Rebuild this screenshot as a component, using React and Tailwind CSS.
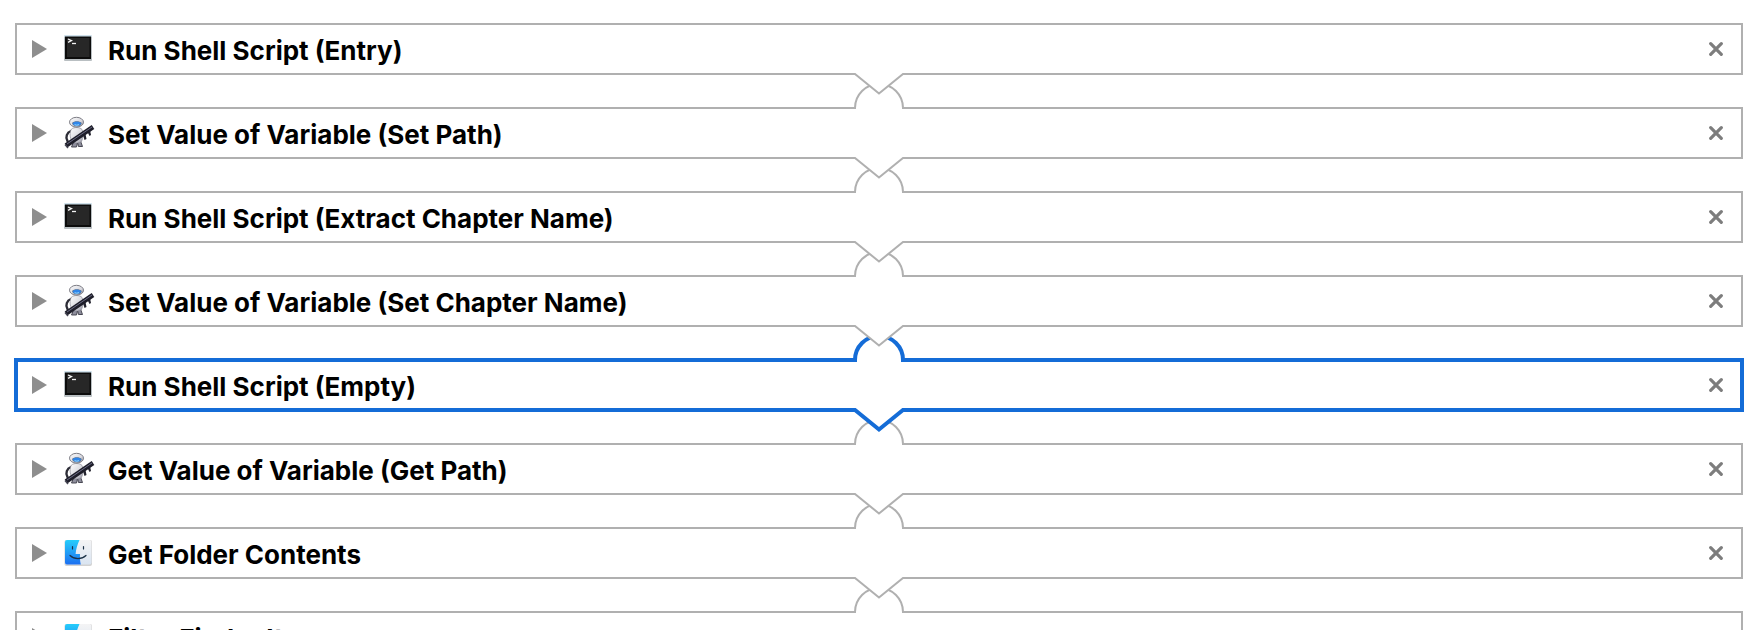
import React from "react";

const actions = [
  { name: "Run Shell Script (Entry)", icon: "terminal" },
  { name: "Set Value of Variable (Set Path)", icon: "robot" },
  { name: "Run Shell Script (Extract Chapter Name)", icon: "terminal" },
  { name: "Set Value of Variable (Set Chapter Name)", icon: "robot" },
  { name: "Run Shell Script (Empty)", icon: "terminal", selected: true },
  { name: "Get Value of Variable (Get Path)", icon: "robot" },
  { name: "Get Folder Contents", icon: "finder" },
  { name: "Filter Finder Items", icon: "finder" },
];

function TerminalIcon() {
  return (
    <svg viewBox="0 0 32 32" className="size-8" aria-hidden="true">
      <rect x="2" y="3" width="28" height="25" rx="1" fill="#b9bfc2" />
      <rect x="2" y="2" width="28" height="2" rx="1" fill="#cfe0ea" />
      <rect x="3" y="3.5" width="26" height="22.5" fill="#0c0c0c" />
      <rect x="5" y="5" width="22.5" height="19" fill="#272727" />
      <path d="M6 6 9.500 7.600 6 9.400" fill="none" stroke="#f2f2f2" strokeWidth="1.3" />
      <path d="M10 10.500h4" stroke="#f2f2f2" strokeWidth="1.3" />
    </svg>
  );
}

function RobotIcon() {
  return (
    <svg viewBox="0 0 32 32" className="size-8 overflow-visible" aria-hidden="true">
      <defs>
        <linearGradient id="shell" x1="0" y1="0" x2="1" y2="1">
          <stop offset="0" stopColor="#ffffff" />
          <stop offset="0.6" stopColor="#d8d8de" />
          <stop offset="1" stopColor="#9292a0" />
        </linearGradient>
      </defs>
      <path d="M9 14C5 15.500 3 20 5.500 24" fill="none" stroke="#2c2c36" strokeWidth="2.400" strokeLinecap="round" />
      <path d="M11.500 25 9.500 30h5l1-4zM15.500 25l1 4.500h4L18.500 24z" fill="#8e8e9c" stroke="#3b3b46" strokeWidth=".9" />
      <path d="M9.500 12C12 10 18 10 20 12.500c1.500 3 1.500 8-.5 12-2 1.800-6.500 2-9 .5C7.500 21 7.500 15 9.500 12z" fill="url(#shell)" stroke="#8c8c98" strokeWidth=".7" />
      <ellipse cx="14.500" cy="5.200" rx="7" ry="4.900" fill="url(#shell)" stroke="#6f6f78" strokeWidth=".9" />
      <path d="M10 6C12 3.500 17.500 3.500 19.800 6c-.5 2.400-2.300 3.300-4.800 3.300S10.500 8.400 10 6z" fill="#5c7392" />
      <path d="M10.800 6.200c2-1.900 6-1.900 8.200 0-.5 2-2.200 2.600-4.100 2.600s-3.700-.7-4.100-2.600z" fill="#2f86ea" />
      <path d="M12.600 7.700q2.200 1 4.400 0" fill="none" stroke="#9addff" strokeWidth="1" />
      <path d="m21 18 1.500 5 2-1-1-5zM25.500 15l2 4 1.500-1-1-5z" fill="#24242f" />
      <path d="M4 28.500 31 10" stroke="#1e1e2a" strokeWidth="4.600" />
      <path d="M5 27 30 10" stroke="#6c6c84" strokeWidth="1" />
      <path d="m3 27.500 3 3.500" stroke="#454552" strokeWidth="1.500" />
    </svg>
  );
}

function FinderIcon() {
  return (
    <svg viewBox="0 0 32 32" className="size-8" aria-hidden="true">
      <defs>
        <linearGradient id="face" x1="0" y1="0" x2="0" y2="1">
          <stop offset="0" stopColor="#26cdfb" />
          <stop offset="1" stopColor="#1c6ff0" />
        </linearGradient>
        <linearGradient id="side" x1="0" y1="0" x2="0" y2="1">
          <stop offset="0" stopColor="#f4f4f5" />
          <stop offset="1" stopColor="#d9e4f1" />
        </linearGradient>
      </defs>
      <rect x="2.500" y="3" width="27.500" height="26" rx="2" fill="#d2d2d2" />
      <rect x="3" y="3" width="26.500" height="24.500" rx="2" fill="url(#side)" />
      <path d="M5 3h12.500C15.500 7 14 12 13.600 17H18c-.2 3.500 0 7 .8 10.500H5a2 2 0 0 1-2-2V5a2 2 0 0 1 2-2z" fill="url(#face)" />
      <path d="M10.500 9.500v2.500M21.500 9.500v2.500M8 18.500c4.500 4.200 11.500 4.200 16 0" fill="none" stroke="#1b3146" strokeWidth="1.200" strokeLinecap="round" />
    </svg>
  );
}

const icons = { terminal: TerminalIcon, robot: RobotIcon, finder: FinderIcon };

function Socket({ selected }) {
  return (
    <svg
      viewBox="0 0 56 32"
      className="pointer-events-none absolute bottom-full left-1/2 h-8 w-14 -translate-x-1/2 translate-y-1.5"
      aria-hidden="true"
    >
      <path d="M4 30v-3a24 24 0 0 1 48 0v3z" fill="#fff" />
      <path
        d="M1 27h3a24 24 0 0 1 48 0h3"
        fill="none"
        stroke={selected ? "#146cd7" : "#b0b0b0"}
        strokeWidth={selected ? 4 : 2}
      />
    </svg>
  );
}

function Arrow({ selected }) {
  return (
    <svg
      viewBox="0 0 56 28"
      className="pointer-events-none absolute top-full left-1/2 h-7 w-14 -translate-x-1/2 -translate-y-1"
      aria-hidden="true"
    >
      <path d="M4 0v3l24 19.500L52 3V0z" fill="#fff" />
      <path
        d="M1 3h3l24 19.500L52 3h3"
        fill="none"
        stroke={selected ? "#146cd7" : "#b0b0b0"}
        strokeWidth={selected ? 4 : 2}
      />
    </svg>
  );
}

function ActionRow({ action, first, depth }) {
  const Icon = icons[action.icon];
  const { selected } = action;
  return (
    <li className="relative" style={{ zIndex: depth }}>
      <div
        className={
          selected
            ? "-m-px flex h-[54px] items-center border-4 border-[#146cd7] bg-white px-3"
            : "flex h-[52px] items-center border-2 border-[#b0b0b0] bg-white px-[13px]"
        }
      >
        <button type="button" aria-label={`Expand ${action.name}`} className="flex h-8 w-6 items-center pl-0.5">
          <svg viewBox="0 0 15 18" className="h-[18px] w-[15px]" aria-hidden="true">
            <path d="M0 0 15 9 0 18z" fill="#8e8e8e" />
          </svg>
        </button>
        <span className="ml-2">
          <Icon />
        </span>
        <h2 className="ml-3.5 grow pt-1 text-[26px] leading-8 font-bold whitespace-nowrap text-black">
          {action.name}
        </h2>
        <button type="button" aria-label={`Remove ${action.name}`} className="flex size-6 items-center justify-center">
          <svg viewBox="0 0 14 14" className="size-3.5" aria-hidden="true">
            <path d="M1.700 1.700 12.300 12.300M12.300 1.700 1.700 12.300" stroke="#7d7d7d" strokeWidth="3.200" strokeLinecap="round" />
          </svg>
        </button>
      </div>
      {!first && <Socket selected={selected} />}
      <Arrow selected={selected} />
    </li>
  );
}

export default function App() {
  return (
    <main className="h-screen overflow-hidden bg-white px-[15px] pt-[23px] font-['Inter',sans-serif]">
      <ul className="isolate flex flex-col gap-8">
        {actions.map((action, i) => (
          <ActionRow key={action.name} action={action} first={i === 0} depth={actions.length - i} />
        ))}
      </ul>
    </main>
  );
}
